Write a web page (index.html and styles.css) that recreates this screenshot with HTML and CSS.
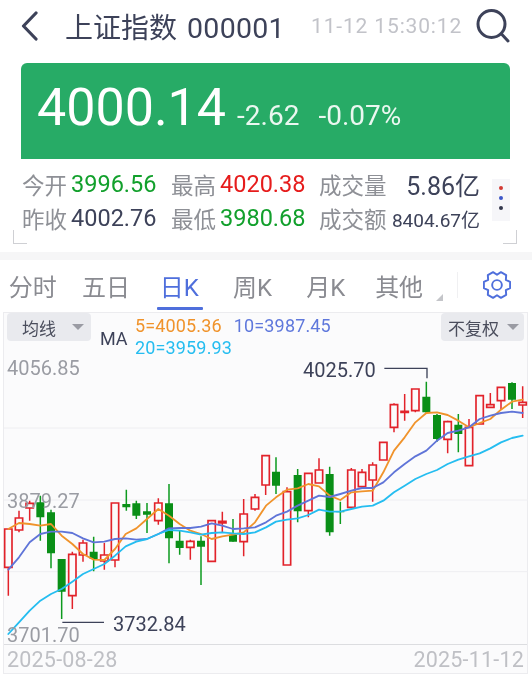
FILE: index.html
```html
<!DOCTYPE html>
<html lang="zh">
<head>
<meta charset="utf-8">
<title>上证指数 000001</title>
<link rel="stylesheet" href="styles.css">
</head>
<body>
<div class="page">
  <header class="topbar">
    <svg class="back" viewBox="0 0 17 30"><path d="M15 2 2.5 15 15 28"/></svg>
    <h1 class="title"><span>上证指数</span><span class="code">000001</span></h1>
    <span class="time">11-12 15:30:12</span>
    <svg class="search" viewBox="0 0 34 34"><circle cx="15.5" cy="15" r="13.5"/><path d="M25.5 25 32 32"/></svg>
  </header>

  <section class="quote">
    <span class="price">4000.14</span>
    <span class="delta">-2.62</span>
    <span class="delta pct">-0.07%</span>
  </section>

  <section class="stats">
    <div class="stat"><span class="k">今开</span><span class="v green">3996.56</span></div>
    <div class="stat"><span class="k">最高</span><span class="v red">4020.38</span></div>
    <div class="stat wide"><span class="k">成交量</span><span class="v big">5.86亿</span></div>
    <div class="stat"><span class="k">昨收</span><span class="v">4002.76</span></div>
    <div class="stat"><span class="k">最低</span><span class="v green">3980.68</span></div>
    <div class="stat wide"><span class="k">成交额</span><span class="v small">8404.67亿</span></div>
    <div class="dots"><i class="dot d1"></i><i class="dot d2"></i><i class="dot d3"></i></div>
    <i class="corner left"></i><i class="corner right"></i>
  </section>

  <div class="band"></div>

  <nav class="tabs">
    <span class="tab">分时</span>
    <span class="tab">五日</span>
    <span class="tab active">日K</span>
    <span class="tab">周K</span>
    <span class="tab">月K</span>
    <span class="tab more">其他</span>
    <i class="divider"></i>
    <svg class="gear" viewBox="0 0 26 26"><path d="M25.18 15.81 21.23 17.75 21.52 22.14 16.65 24.95 13 22.5 9.35 24.95 4.48 22.14 4.77 17.75.82 15.81V10.19L4.77 8.25 4.48 3.86 9.35 1.05 13 3.5 16.65 1.05 21.52 3.86 21.23 8.25 25.18 10.19Z"/><circle cx="13" cy="13" r="4.5"/></svg>
  </nav>

  <section class="chart">
    <div class="tools">
      <span class="select first">均线<i class="caret"></i></span>
      <span class="ma-name">MA</span>
      <div class="legend">
        <span class="orange">5=4005.36</span>
        <span class="indigo">10=3987.45</span>
        <span class="cyan">20=3959.93</span>
      </div>
      <span class="select last">不复权<i class="caret"></i></span>
    </div>

    <svg class="plot" viewBox="0 -141 1596 1086">
      <path class="grid" d="M10 207H1584M10 423H1584M10 638H1584"/>
      <path class="wick-g" d="M121 410V545M153 452V628M185 600V780M281 533V637M379 392V455M409 425V480M441 432V522M507 375V613M539 515V587M603 532V678M699 480V548M828 295V405M893 330V490M989 323V530M1021 428V495M1279 68V162M1311 165V248M1375 165V280M1536 70V150"/>
      <path class="body-g" d="M109 430h24V475h-24zM141 460h24V583h-24zM173 600h24V698h-24zM269 578h24V600h-24zM367 435h24V445h-24zM397 433h24V470h-24zM429 457h24V467h-24zM495 433h24V538h-24zM527 545h24V567h-24zM591 545h24V563h-24zM687 527h24V548h-24zM816 338h24V380h-24zM881 348h24V457h-24zM977 345h24V520h-24zM1009 457h24V460h-24zM1267 113h24V160h-24zM1299 168h24V240h-24zM1363 197h24V225h-24zM1524 72h24V122h-24z"/>
      <path class="wick-r" d="M25 510V710M57 455V520M89 425V485M217 578V750M249 542V608M313 552V632M345 432V625M571 542V602M475 418V497M635 485V607M667 458V520M731 420V592M765 405V455M797 290V408M861 385V618M925 343V475M957 298V372M1054 327V448M1086 330V385M1118 310V428M1150 250V303M1182 133V220M1214 105V185M1246 90V160M1343 185V283M1407 180V320M1439 110V195M1471 102V145M1503 85V152M1568 82V177"/>
      <path class="body-r" d="M14 510h22V625h-22zM46 477h22V513h-22zM78 433h22V447h-22zM206 586h22V710h-22zM238 552h22V588h-22zM302 588h22V606h-22zM334 432h22V603h-22zM560 547h22V565h-22zM464 432h22V485h-22zM624 485h22V607h-22zM656 487h22V492h-22zM720 465h22V548h-22zM754 415h22V450h-22zM786 290h22V378h-22zM850 398h22V618h-22zM914 343h22V455h-22zM946 333h22V372h-22zM1043 333h22V445h-22zM1075 340h22V383h-22zM1107 318h22V363h-22zM1139 250h22V303h-22zM1171 137h22V205h-22zM1203 157h22V160h-22zM1235 90h22V155h-22zM1332 188h22V241h-22zM1396 205h22V320h-22zM1428 110h22V195h-22zM1460 137h22V145h-22zM1492 85h22V125h-22zM1557 130h22V138h-22z"/>
      <path class="line l-orange" d="M25 510 57 492 89 495 121 500 153 495 185 530 217 555 249 585 281 602 313 603 345 570 377 525 409 508 441 480 475 450 507 470 539 495 571 515 603 525 635 540 667 532 699 527 731 520 765 490 798 440 828 415 861 392 893 388 925 375 957 382 989 410 1021 423 1054 400 1086 397 1118 395 1150 340 1182 275 1214 235 1246 190 1279 162 1311 160 1343 168 1375 185 1407 205 1439 192 1471 180 1503 152 1536 128 1568 122"/>
      <path class="line l-indigo" d="M25 632 57 595 89 550 121 525 153 518 185 518 217 522 249 538 281 550 313 548 345 540 377 538 409 542 441 540 475 525 507 508 539 507 571 507 603 503 635 493 667 500 699 510 731 508 765 505 798 490 828 470 861 458 893 440 925 425 957 410 989 414 1021 405 1054 395 1086 387 1118 387 1150 370 1182 340 1214 315 1246 292 1279 275 1311 245 1343 222 1375 215 1407 205 1439 180 1471 170 1503 162 1536 158 1568 162"/>
      <path class="line l-cyan" d="M25 825 57 790 89 755 121 725 153 705 185 690 217 668 249 645 281 630 313 615 345 590 377 562 409 548 441 540 475 525 507 513 539 515 571 520 603 527 635 522 667 520 699 523 731 525 765 520 798 505 828 488 861 482 893 478 925 468 957 452 989 458 1021 458 1054 450 1086 443 1118 440 1150 425 1182 400 1214 380 1246 360 1279 345 1311 333 1343 315 1375 302 1407 292 1439 283 1471 268 1503 250 1536 237 1568 230"/>
      <path class="leader" d="M187 790H312M1153 28H1281V58"/>
    </svg>

    <span class="axis a-top">4056.85</span>
    <span class="axis a-mid">3879.27</span>
    <span class="axis a-low">3701.70</span>
    <span class="note n-high">4025.70</span>
    <span class="note n-low">3732.84</span>

    <div class="dates"><span>2025-08-28</span><span>2025-11-12</span></div>
  </section>
</div>
</body>
</html>
```
FILE: styles.css
```css
* { box-sizing: border-box; }
html, body { margin: 0; padding: 0; background: #fff; }
body {
  width: 532px;
  height: 675px;
  overflow: hidden;
  font-family: Roboto, "Noto Sans CJK SC", sans-serif;
  color: #3d4259;
}
.page { width: 532px; height: 675px; filter: blur(0.4px); }

/* top bar */
.topbar { display: flex; align-items: center; height: 52px; padding-left: 21px; }
.back { width: 17px; height: 30px; flex: none; }
.back path { fill: none; stroke: #3d4259; stroke-width: 3.2; stroke-linecap: round; stroke-linejoin: round; }
.title { margin: 0 0 0 27px; font-size: 28px; font-weight: 400; white-space: nowrap; width: 246px; }
.title .code { margin-left: 10px; letter-spacing: 0.3px; font-size: 28.5px; }
.time { font-size: 21px; color: #c2c3c9; white-space: nowrap; width: 165px; letter-spacing: 0.85px; }
.search { width: 34px; height: 34px; flex: none; }
.search circle, .search path { fill: none; stroke: #3d4259; stroke-width: 3; stroke-linecap: round; }

/* quote card */
.quote {
  margin: 11px 22px 0 21px;
  height: 96px;
  padding: 14px 0 0 16px;
  display: flex;
  align-items: baseline;
  background: #27ab66;
  border-radius: 6px 6px 0 0;
  color: #fff;
}
.price { font-size: 52px; line-height: 62px; }
.delta { font-size: 28px; margin-left: 11px; color: #eaf7f0; }
.delta.pct { margin-left: 19px; }

/* stats */
.stats {
  position: relative;
  height: 94px;
  padding: 8px 0 0 22px;
  display: grid;
  grid-template-columns: 149px 148px 161px;
  grid-auto-rows: 34px;
  align-items: center;
}
.stat { display: flex; align-items: center; gap: 4px; white-space: nowrap; }
.stat.wide { justify-content: space-between; }
.k { font-size: 22.5px; color: #8e9096; }
.v { font-size: 23.5px; }
.v.big { font-size: 25px; }
.v.small { font-size: 19px; }
.green { color: #12a02c; }
.red { color: #e61c1c; }

.dots {
  position: absolute;
  left: 492px;
  top: 20px;
  width: 18px;
  height: 42px;
  padding-top: 7px;
  display: flex;
  flex-direction: column;
  align-items: center;
  gap: 6px;
  background: #f6f6f9;
}
.dot { width: 4px; height: 4px; border-radius: 50%; }
.d1 { background: #d23a34; }
.d2 { background: #3c55c8; }
.d3 { background: #33374c; }

.corner { position: absolute; top: 71px; width: 14px; height: 14px; border-bottom: 1px solid #cfd0d4; }
.corner.left { left: 13px; border-left: 1px solid #cfd0d4; }
.corner.right { left: 503px; border-right: 1px solid #cfd0d4; }

.band { height: 8px; background: #f6f6f7; transform: translateY(-1px); }

/* tabs */
.tabs { position: relative; height: 51px; margin-left: -4px; display: flex; align-items: center; padding-bottom: 3px; }
.tab { width: 73.3px; text-align: center; font-size: 24px; color: #8a8b91; white-space: nowrap; }
.tab.active { color: #4f6fdc; position: relative; }
.tab.active::after {
  content: "";
  position: absolute;
  left: 14px;
  right: 13px;
  top: 39px;
  height: 3px;
  background: #4f6fdc;
  border-radius: 1px;
}
.tab.more { position: relative; }
.tab.more::after {
  content: "";
  position: absolute;
  right: -7px;
  bottom: 2px;
  border-style: solid;
  border-width: 0 0 7px 7px;
  border-color: transparent transparent #c4c5c9 transparent;
}
.divider { position: absolute; left: 461px; top: 11px; width: 1px; height: 26px; background: #f0f0f2; }
.gear { position: absolute; left: 487px; top: 10px; width: 28px; height: 28px; }
.gear path, .gear circle { fill: none; stroke: #4f6fdc; stroke-width: 1.8; stroke-linejoin: round; }

/* chart */
.chart { position: relative; height: 362px; }
.chart::before {
  content: "";
  position: absolute;
  left: 3px;
  right: 4px;
  top: 0;
  bottom: 0;
  background: #fbfbfc;
  border: 1px solid #ececef;
}
.tools { position: relative; z-index: 2; height: 47px; }
.select {
  position: absolute;
  top: 1px;
  height: 28px;
  display: flex;
  align-items: center;
  gap: 16px;
  padding-left: 15px;
  background: #e9eaee;
  border-radius: 4px;
  font-size: 17px;
  color: #4a4d5c;
}
.select.first { left: 7px; width: 84px; }
.select.last { left: 441px; width: 83px; padding-left: 7px; gap: 8px; }
.caret { width: 0; height: 0; border-style: solid; border-width: 6px 6px 0 6px; border-color: #9a9ba3 transparent transparent transparent; }
.ma-name { position: absolute; left: 100px; top: 16px; font-size: 18px; line-height: 22px; color: #3d4259; }
.legend {
  position: absolute;
  left: 135px;
  top: 3px;
  width: 210px;
  display: flex;
  flex-wrap: wrap;
  column-gap: 12px;
  font-size: 18px;
  letter-spacing: 0.15px;
  line-height: 22px;
}
.orange { color: #f0932b; }
.indigo { color: #5f78dc; }
.cyan { color: #25bdf0; }

.plot { position: absolute; left: 0; top: 0; width: 532px; height: 362px; }
.grid { fill: none; stroke: #eeeef1; stroke-width: 3; }
.wick-g { fill: none; stroke: #0d9a1e; stroke-width: 4.5; }
.body-g { fill: #0a8f17; }
.wick-r { fill: none; stroke: #e2222a; stroke-width: 4.5; }
.body-r { fill: #fbfbfc; stroke: #e2222a; stroke-width: 5; }
.line { fill: none; stroke-width: 5.5; stroke-linejoin: round; stroke-linecap: round; }
.l-orange { stroke: #f0932b; }
.l-indigo { stroke: #5f74d8; }
.l-cyan { stroke: #25bdf0; }
.leader { fill: none; stroke: #3d4259; stroke-width: 4; }

.axis { position: absolute; left: 7px; font-size: 20px; line-height: 24px; color: #9a9ca3; }
.a-top { top: 44px; }
.a-mid { top: 177px; }
.a-low { top: 311px; }
.note { position: absolute; font-size: 20px; line-height: 24px; color: #3d4259; }
.n-high { left: 303px; top: 46px; }
.n-low { left: 113px; top: 300px; }

.dates {
  position: absolute;
  left: 4px;
  right: 5px;
  bottom: 1px;
  height: 29px;
  padding: 0 3px;
  display: flex;
  align-items: center;
  justify-content: space-between;
  border-top: 1px solid #dcdde0;
  font-size: 21.5px;
  letter-spacing: 0.2px;
  color: #bfc0c5;
}
```
